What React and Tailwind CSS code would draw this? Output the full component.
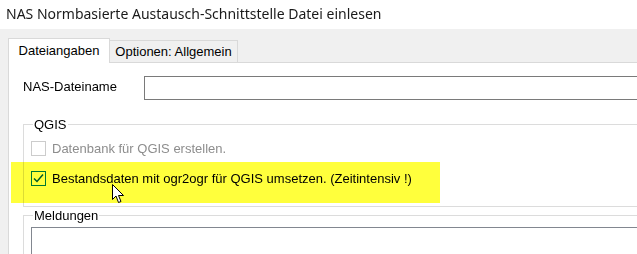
import React from "react";

function CheckBox({ checked, disabled }) {
  return (
    <div
      className={
        "w-[15px] h-[15px] shrink-0 border bg-white flex items-center justify-center " +
        (disabled ? "border-[#cccccc]" : "border-[#0078d7]")
      }
    >
      {checked && (
        <svg width="13" height="13" viewBox="0 0 13 13">
          <path d="M2 6.5 L5 9.5 L11 2.5" fill="none" stroke="#005a9e" strokeWidth="1.5" />
        </svg>
      )}
    </div>
  );
}

export default function App() {
  return (
    <div
      className="relative w-[637px] h-[254px] overflow-hidden bg-white text-[13px] text-black"
      style={{ fontFamily: '"Liberation Sans", Arial, sans-serif' }}
    >
      {/* Title */}
      <div
        className="h-[29px] pl-[6px] pb-[3px] flex items-center text-[14px] text-[#1a1a1a]"
        style={{ fontFamily: '"Noto Sans", "Open Sans", sans-serif' }}
      >
        NAS Normbasierte Austausch-Schnittstelle Datei einlesen
      </div>

      {/* Gray client area */}
      <div className="bg-[#f0f0f0] h-[225px] pl-[8px] pt-[9px]">
        {/* Tab strip */}
        <div className="flex items-end h-[24px] relative z-10">
          <div className="w-[102px] h-[25px] bg-white border border-b-0 border-[#d9d9d9] flex items-center justify-center leading-[15px] -mb-[1px] pb-[1px]">
            Dateiangaben
          </div>
          <div className="w-[128px] h-[22px] bg-[#f0f0f0] border border-l-0 border-b-0 border-[#d9d9d9] flex items-center justify-center leading-[15px]">
            Optionen: Allgemein
          </div>
        </div>

        {/* Tab panel */}
        <div className="w-[720px] h-[200px] bg-white border-t border-l border-[#d9d9d9] pl-[14px] flex flex-col items-start">
          <div className="flex items-center h-[24px] mt-[13px]">
            <div className="w-[121px] leading-[15px] mb-[4px]">NAS-Dateiname</div>
            <div className="w-[560px] h-[24px] border border-[#7a7a7a] bg-white" />
          </div>

          {/* QGIS group */}
          <div className="mt-[24px] w-[680px] border border-[#dcdcdc] pl-[7px] pb-[20px] flex flex-col items-start">
            <div className="-mt-[8px] ml-[2px] h-[15px] leading-[15px] bg-white px-[1px]">
              QGIS
            </div>
            <div className="flex items-center h-[15px] mt-[9px] gap-[6px]">
              <CheckBox disabled />
              <span className="leading-[15px] text-[#8d8d8d]">Datenbank für QGIS erstellen.</span>
            </div>
            <div className="flex items-center h-[15px] mt-[15px] gap-[6px]">
              <CheckBox checked />
              <span className="leading-[15px]">
                Bestandsdaten mit ogr2ogr für QGIS umsetzen. (Zeitintensiv !)
              </span>
            </div>
          </div>

          {/* Meldungen group */}
          <div className="mt-[8px] w-[680px] h-[60px] border border-[#dcdcdc] pl-[7px] flex flex-col items-start">
            <div className="-mt-[8px] ml-[2px] h-[15px] leading-[15px] bg-white px-[1px]">
              Meldungen
            </div>
            <div className="mt-[4px] w-[640px] h-[40px] border border-[#828790] bg-white" />
          </div>
        </div>
      </div>

      {/* Highlighter overlay */}
      <div className="absolute left-[11px] top-[162px] w-[429px] h-[41px] bg-[#ffff3c] mix-blend-multiply pointer-events-none" />

      {/* Mouse cursor */}
      <svg
        className="absolute left-[112px] top-[184px]"
        width="13"
        height="20"
        viewBox="0 0 13 20"
      >
        <path
          d="M0.5 0.5 L0.5 15.5 L4 12 L6.5 18.5 L9 17.5 L6.5 11.5 L11.5 11.5 Z"
          fill="white"
          stroke="black"
          strokeWidth="1"
          strokeLinejoin="miter"
        />
      </svg>
    </div>
  );
}
